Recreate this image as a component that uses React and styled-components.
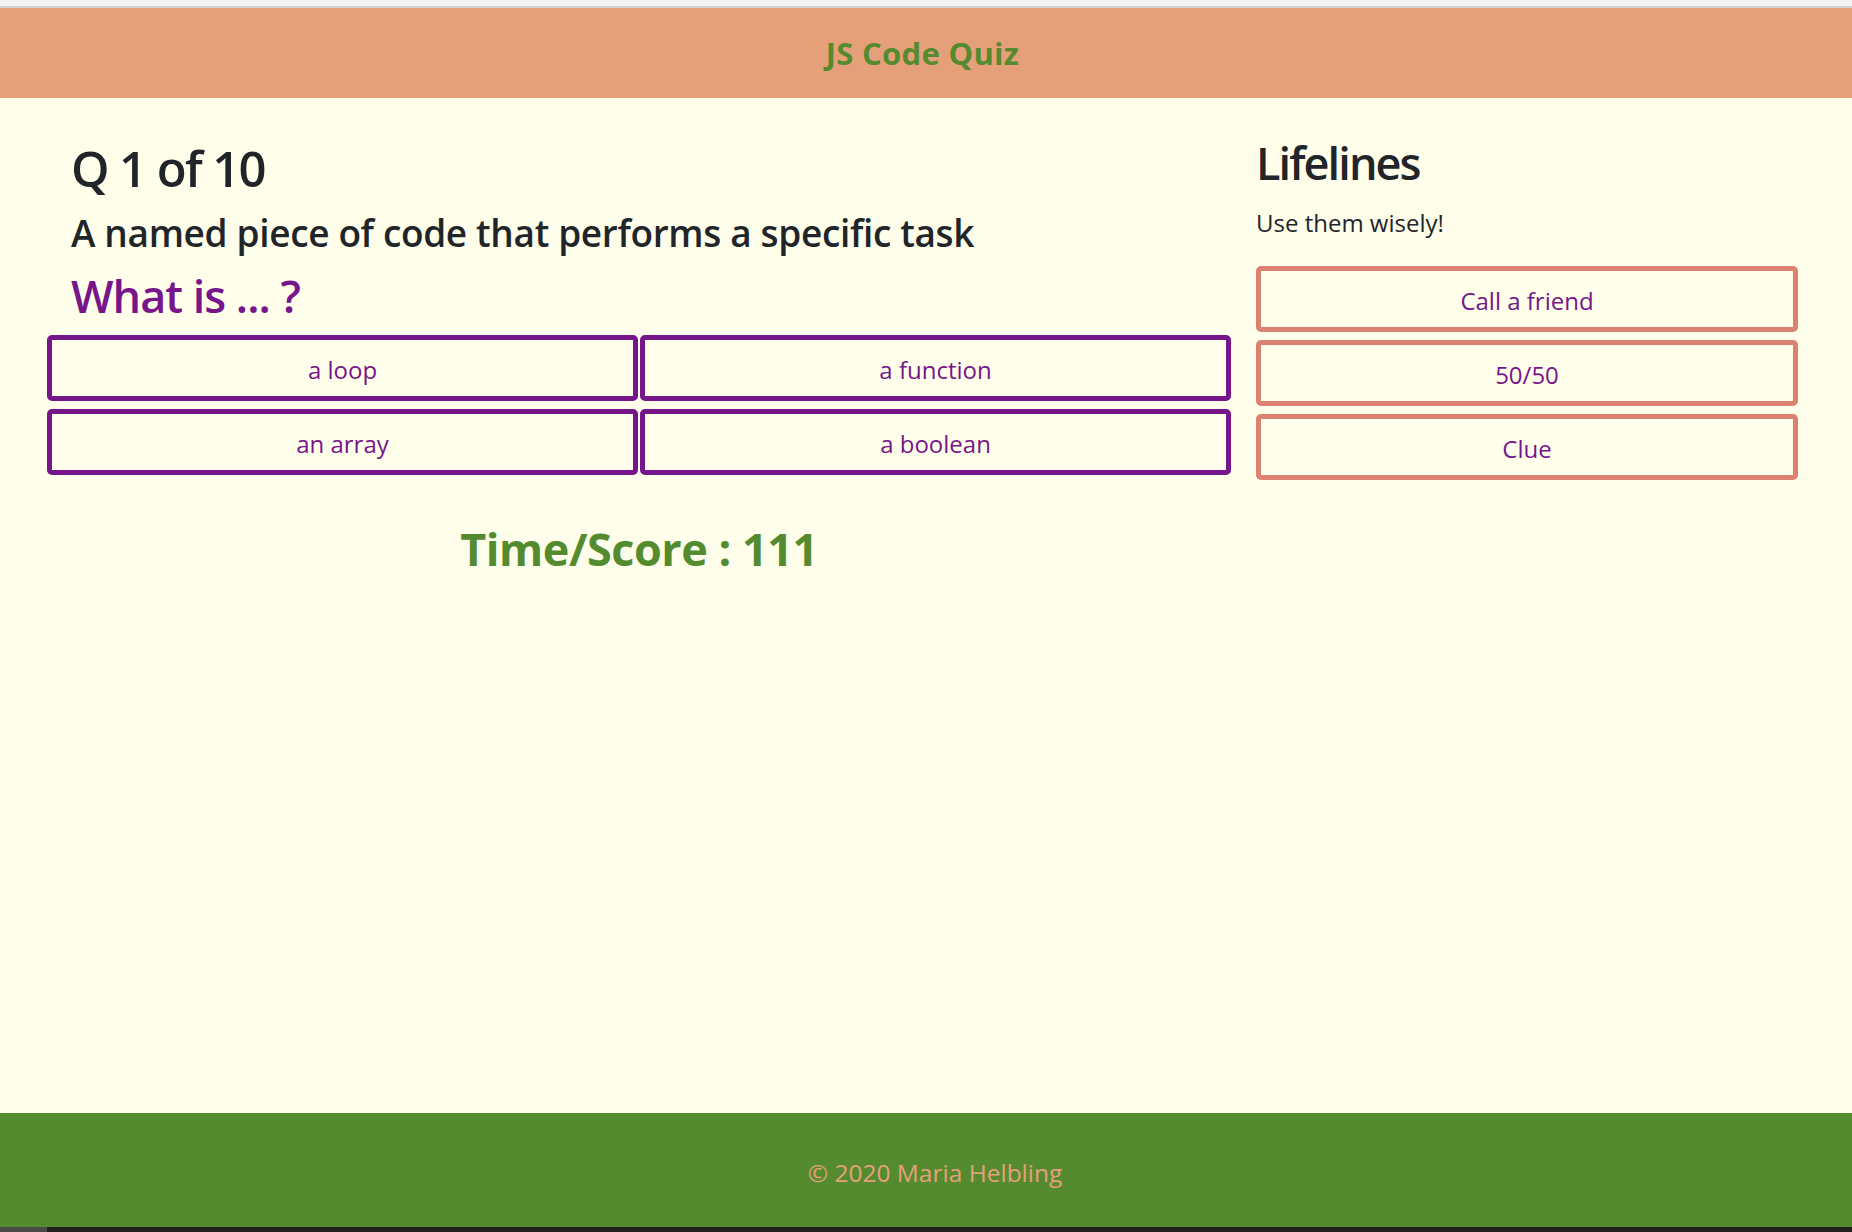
import React, { useState } from 'react';
import styled, { createGlobalStyle } from 'styled-components';

const answers = ['a loop', 'a function', 'an array', 'a boolean'];
const lifelines = ['Call a friend', '50/50', 'Clue'];

const App = () => {
  const [score] = useState(111);

  return (
    <>
      <GlobalStyle />
      <Page>
        <BrowserEdge />
        <Header>
          <Brand>JS Code Quiz</Brand>
        </Header>

        <Main>
          <QuestionColumn>
            <Counter>Q 1 of 10</Counter>
            <Question>A named piece of code that performs a specific task</Question>
            <Prompt>What is ... ?</Prompt>

            <AnswerGrid>
              {answers.map((answer) => (
                <AnswerButton key={answer} type="button">
                  {answer}
                </AnswerButton>
              ))}
            </AnswerGrid>

            <Score>Time/Score : {score}</Score>
          </QuestionColumn>

          <LifelineColumn>
            <LifelineTitle>Lifelines</LifelineTitle>
            <Hint>Use them wisely!</Hint>
            <LifelineList>
              {lifelines.map((item) => (
                <LifelineButton key={item} type="button">
                  {item}
                </LifelineButton>
              ))}
            </LifelineList>
          </LifelineColumn>
        </Main>

        <Footer>
          <FooterText>&copy; 2020 Maria Helbling</FooterText>
        </Footer>
        <Taskbar />
      </Page>
    </>
  );
};

// Styled components
const GlobalStyle = createGlobalStyle`
  * {
    box-sizing: border-box;
  }

  html, body {
    margin: 0;
    padding: 0;
    background-color: #fffeeb;
  }

  body {
    font-family: "Open Sans", "Noto Sans", sans-serif;
    color: #212529;
  }
`;

const Page = styled.div`
  min-height: 100vh;
  display: flex;
  flex-direction: column;
  background-color: #fffeeb;
`;

const BrowserEdge = styled.div`
  height: 8px;
  background-color: #f3f3f3;
  border-bottom: 2px solid #d2d2d2;
`;

const Header = styled.header`
  height: 90px;
  display: flex;
  align-items: center;
  justify-content: center;
  padding-right: 7px;
  background-color: #e5a07a;
`;

const Brand = styled.h1`
  margin: 0;
  font-size: 31px;
  line-height: 37px;
  font-weight: 700;
  letter-spacing: 0.3px;
  color: #558b2f;
`;

const Main = styled.main`
  flex: 1;
  display: grid;
  grid-template-columns: 1184px 542px;
  column-gap: 25px;
  align-items: start;
  padding: 40px 54px 0 47px;
`;

const QuestionColumn = styled.section`
  display: flex;
  flex-direction: column;
`;

const Counter = styled.h2`
  margin: 0 0 13px;
  padding-left: 24px;
  font-size: 49px;
  line-height: 60px;
  font-weight: 600;
  letter-spacing: -1.6px;
  color: #212529;
`;

const Question = styled.h3`
  margin: 0 0 14px;
  padding-left: 24px;
  font-size: 37px;
  line-height: 44px;
  font-weight: 600;
  letter-spacing: -0.35px;
  color: #212529;
`;

const Prompt = styled.h3`
  margin: 0 0 12px;
  padding-left: 24px;
  font-size: 45px;
  line-height: 54px;
  font-weight: 600;
  letter-spacing: -1px;
  color: #76168a;
`;

const AnswerGrid = styled.div`
  display: grid;
  grid-template-columns: 1fr 1fr;
  column-gap: 2px;
  row-gap: 8px;
`;

const Button = styled.button`
  height: 66px;
  padding: 3px 0 0;
  border-radius: 5px;
  background-color: transparent;
  font-family: "Open Sans", "Noto Sans", sans-serif;
  font-size: 24px;
  line-height: 30px;
  font-weight: 400;
  color: #76168a;
  cursor: pointer;
`;

const AnswerButton = styled(Button)`
  border: 5px solid #76168a;

  &:hover {
    background-color: #f5ecd8;
  }
`;

const Score = styled.h2`
  margin: 47px 0 0;
  text-align: center;
  font-size: 45px;
  line-height: 54px;
  font-weight: 700;
  letter-spacing: -0.5px;
  color: #558b2f;
`;

const LifelineColumn = styled.aside`
  display: flex;
  flex-direction: column;
`;

const LifelineTitle = styled.h2`
  margin: 0 0 20px;
  font-size: 45px;
  line-height: 50px;
  font-weight: 600;
  letter-spacing: -1.9px;
  color: #212529;
`;

const Hint = styled.p`
  margin: 0 0 28px;
  font-size: 24px;
  line-height: 30px;
  color: #212529;
`;

const LifelineList = styled.div`
  display: flex;
  flex-direction: column;
  gap: 8px;
`;

const LifelineButton = styled(Button)`
  width: 100%;
  border: 5px solid #dc8272;

  &:hover {
    background-color: #fbeee2;
  }
`;

const Footer = styled.footer`
  height: 114px;
  display: flex;
  align-items: center;
  justify-content: center;
  padding: 6px 0 0 18px;
  background-color: #558b2f;
`;

const FooterText = styled.p`
  margin: 0;
  font-size: 24.5px;
  line-height: 30px;
  color: #e5a07a;
`;

const Taskbar = styled.div`
  height: 5px;
  background: linear-gradient(to right, #4a4a4a 0 47px, #231f1f 47px);
`;

export default App;
